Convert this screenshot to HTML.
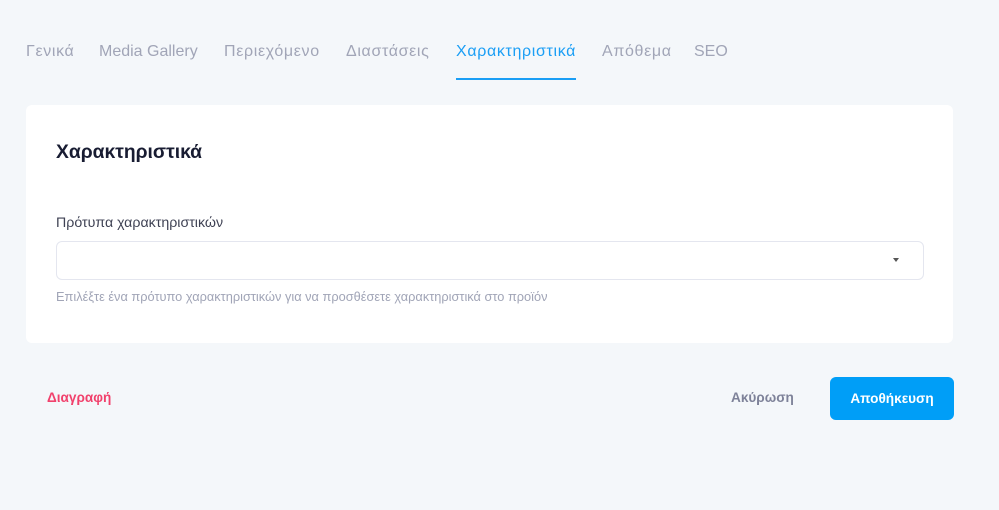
<!DOCTYPE html>
<html><head><meta charset="utf-8"><style>
body{margin:0;width:999px;height:510px;background:#f4f7fa;font-family:"Liberation Sans",sans-serif;position:relative;overflow:hidden}
.t{position:absolute;top:43px;font-size:16px;color:#a1a5b7;white-space:nowrap;letter-spacing:.65px}
.a{color:#1a9ef5}
.u{position:absolute;left:456px;top:78px;width:120px;height:2px;background:#1a9ef5}
.card{position:absolute;left:26px;top:105px;width:927px;height:238px;background:#fff;border-radius:6px}
.h{position:absolute;left:56px;top:142px;font-size:19.3px;font-weight:bold;color:#181c32}
.l{position:absolute;left:56px;top:215px;font-size:14.2px;color:#3f4254}
.s{position:absolute;left:56px;top:241px;width:866px;height:37px;border:1px solid #e4e6ef;border-radius:6px;background:#fff}
.ar{position:absolute;left:893px;top:258px;width:0;height:0;border-left:3px solid transparent;border-right:3px solid transparent;border-top:4px solid #555}
.hp{position:absolute;left:56px;top:289px;font-size:12.8px;color:#a1a5b7}
.d{position:absolute;left:47px;top:390px;font-size:13.6px;font-weight:bold;color:#f1416c}
.c{position:absolute;left:731px;top:390px;font-size:13.6px;font-weight:bold;color:#7e8299}
.b{position:absolute;left:830px;top:377px;width:124px;height:43px;background:#009ef7;border-radius:6px;color:#fff;font-size:13.6px;font-weight:bold;text-align:center;line-height:43px}
</style></head><body>
<div class="t" style="left:26px">Γενικά</div>
<div class="t" style="left:99px;letter-spacing:0">Media Gallery</div>
<div class="t" style="left:224px">Περιεχόμενο</div>
<div class="t" style="left:346px">Διαστάσεις</div>
<div class="t a" style="left:456px">Χαρακτηριστικά</div>
<div class="t" style="left:602px">Απόθεμα</div>
<div class="t" style="left:694px;letter-spacing:0">SEO</div>
<div class="u"></div>
<div class="card"></div>
<div class="h">Χαρακτηριστικά</div>
<div class="l">Πρότυπα χαρακτηριστικών</div>
<div class="s"></div><div class="ar"></div>
<div class="hp">Επιλέξτε ένα πρότυπο χαρακτηριστικών για να προσθέσετε χαρακτηριστικά στο προϊόν</div>
<div class="d">Διαγραφή</div>
<div class="c">Ακύρωση</div>
<div class="b">Αποθήκευση</div>
</body></html>
